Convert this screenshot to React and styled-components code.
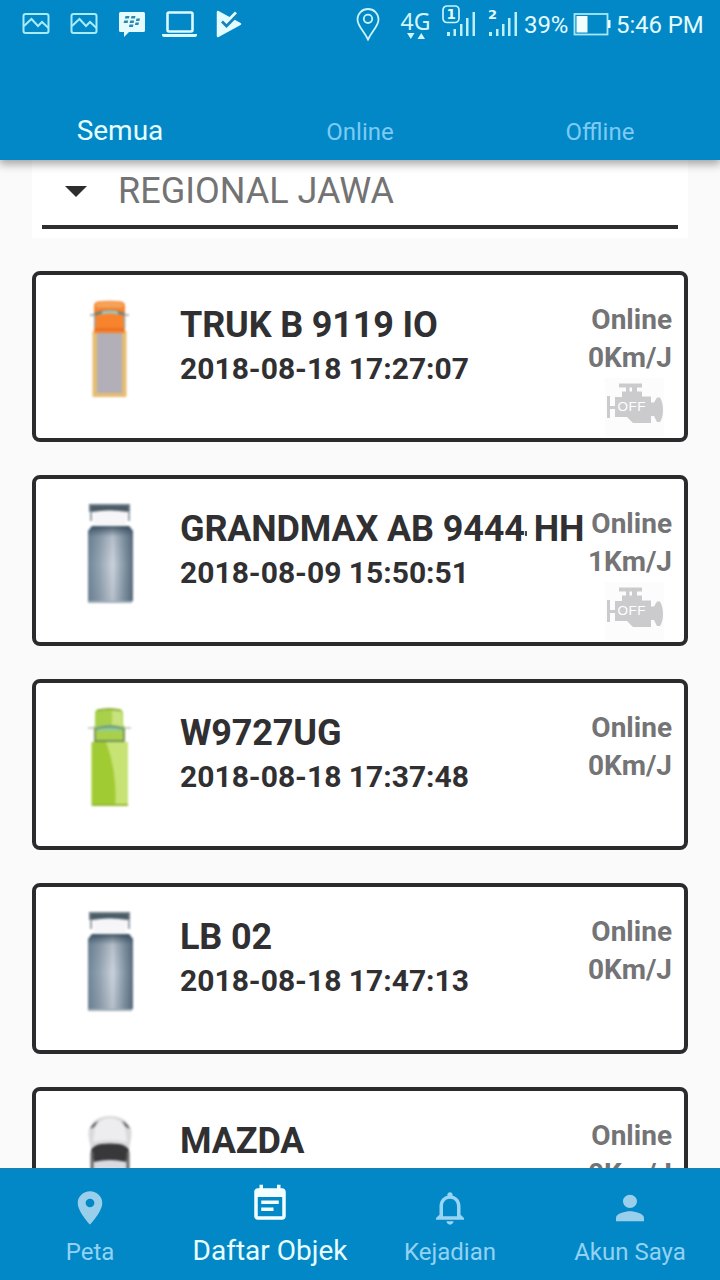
import React from "react";
import styled, { createGlobalStyle } from "styled-components";

const GlobalStyle = createGlobalStyle`
  * {
    box-sizing: border-box;
  }
  body {
    margin: 0;
    background: #fafafa;
    font-family: Roboto, "Liberation Sans", sans-serif;
  }
  svg {
    display: block;
    flex: none;
  }
`;

const Screen = styled.div`
  display: flex;
  flex-direction: column;
  width: 720px;
  height: 1280px;
  overflow: hidden;
  background: #fafafa;
`;

const Header = styled.header`
  position: relative;
  z-index: 1;
  display: flex;
  flex-direction: column;
  justify-content: space-between;
  flex: none;
  height: 160px;
  background: #0288c7;
  box-shadow: 0 3px 9px 1px rgba(0, 0, 0, 0.36);
`;

const StatusBar = styled.div`
  display: flex;
  justify-content: space-between;
  height: 50px;
  padding-left: 12px;
  color: #e4fbff;
`;

const StatusGroup = styled.div`
  display: flex;
  align-items: center;
`;

const StatusText = styled.span`
  width: ${(props) => props.$width}px;
  padding-top: 1px;
  font-size: 24px;
  line-height: 49px;
  letter-spacing: -0.1px;
  white-space: nowrap;
`;

const Tabs = styled.nav`
  display: grid;
  grid-template-columns: repeat(3, 1fr);
  height: 60px;
`;

const Tab = styled.span`
  text-align: center;
  font-size: ${(props) => (props.$active ? 28 : 24)}px;
  line-height: ${(props) => (props.$active ? 61 : 64)}px;
  color: ${(props) => (props.$active ? "#e6fdff" : "#7dcbf3")};
`;

const List = styled.main`
  display: flex;
  flex-direction: column;
  gap: 33px;
  flex: 1;
  min-height: 0;
  padding: 0 32px;
  overflow: hidden;
`;

const Region = styled.div`
  flex: none;
  height: 78px;
  padding: 0 10px 9px;
  background: #fff;
`;

const RegionSelect = styled.div`
  display: flex;
  align-items: center;
  height: 69px;
  padding: 0 0 3px 23px;
  border-bottom: 4px solid #2f2f31;
  color: #737373;
  font-size: 36px;
  svg {
    margin-right: 31px;
  }
`;

const Card = styled.article`
  display: flex;
  flex: none;
  height: 171px;
  padding: 25px 12px 0 28px;
  border: 4px solid #2b2b2d;
  border-radius: 8px;
  background: #fff;
`;

const Vehicle = styled.div`
  flex: none;
  width: 100px;
  height: 110px;
  filter: blur(0.8px);
`;

const Info = styled.div`
  flex: 1;
  min-width: 0;
  margin-left: 16px;
  padding-top: 3px;
  color: #303032;
  white-space: nowrap;
`;

const Title = styled.h2`
  display: flex;
  align-items: center;
  margin: 0;
  font-size: 36px;
  font-weight: 700;
  line-height: 44px;
  letter-spacing: -0.15px;
`;

const Stub = styled.i`
  width: 2px;
  height: 5px;
  margin: 9px 7px 0 0;
  background: #4a4a4c;
`;

const Time = styled.div`
  font-size: 30px;
  font-weight: 700;
  line-height: 44px;
`;

const State = styled.div`
  display: flex;
  flex-direction: column;
  align-items: flex-end;
  padding-top: 1px;
  color: #747476;
  font-size: 28px;
  font-weight: 700;
  line-height: 38px;
  white-space: nowrap;
  svg {
    margin: 1px 8px 0 0;
  }
`;

const BottomNav = styled.nav`
  display: grid;
  grid-template-columns: repeat(4, 1fr);
  flex: none;
  height: 112px;
  background: #0288c7;
  border-top: 1px solid #1a7fb0;
`;

const NavItem = styled.div`
  display: flex;
  flex-direction: column;
  align-items: center;
  padding-top: ${(props) => (props.$active ? 14 : 19)}px;
  color: ${(props) => (props.$active ? "#e9fdff" : "#93d2f2")};
  font-size: ${(props) => (props.$active ? 28 : 24)}px;
  line-height: 40px;
  white-space: nowrap;
  svg {
    margin-bottom: ${(props) => (props.$active ? 6 : 4)}px;
  }
`;

const PictureIcon = () => (
  <svg width="48" height="50" fill="none" stroke="#a8ecf8" strokeWidth="2">
    <rect x="11.500" y="14" width="25" height="19" rx="2" />
    <path d="M12 26l7.500-7 6.500 7 4-4 6.500 6" />
  </svg>
);

const MessengerIcon = () => (
  <svg width="48" height="50">
    <path d="M12.500 12h23a1.500 1.500 0 0 1 1.500 1.500v17a1.500 1.500 0 0 1-1.500 1.500H21l-5 5v-5h-3.500a1.500 1.500 0 0 1-1.500-1.500v-17A1.500 1.500 0 0 1 12.500 12z" fill="#e4fbff" />
    <g fill="#2b88ae">
      <path d="M17.500 16h4l-.6 2.600h-4zM23.500 16h4l-.6 2.600h-4zM16.200 20.500h4l-.6 2.600h-4zM22.200 20.500h4l-.6 2.600h-4zM28.500 18.500h3.500l-.6 2.600h-3.500zM27.500 22.500h3.500l-.6 2.600h-3.500zM21.500 24.500h4l-.6 2.600h-4z" />
    </g>
  </svg>
);

const LaptopIcon = () => (
  <svg width="48" height="50">
    <rect x="11.500" y="12.500" width="25" height="19" rx="1.500" fill="none" stroke="#dcf9ff" strokeWidth="2.600" />
    <path d="M6 34h35v1a2 2 0 0 1-2 2H8a2 2 0 0 1-2-2z" fill="#dcf9ff" />
  </svg>
);

const PlayCheckIcon = () => (
  <svg width="48" height="50">
    <path d="M14 12L36 24 14 36z" fill="#e4fbff" stroke="#e4fbff" strokeWidth="2.500" strokeLinejoin="round" />
    <path d="M24 20.500L32 12.500" fill="none" stroke="#e4fbff" strokeWidth="2.800" />
    <path d="M18 21.500l4.500 4.500L34 14.500" fill="none" stroke="#1683b8" strokeWidth="2.800" />
  </svg>
);

const LocationIcon = () => (
  <svg width="48" height="50" fill="none" stroke="#c9f4fb" strokeWidth="1.800">
    <path d="M20 9c6 0 10.500 4.600 10.500 10.400C30.500 26 24 31 20 39.500 16 31 9.500 26 9.500 19.400 9.500 13.600 14 9 20 9z" />
    <circle cx="20" cy="18.800" r="4.200" />
  </svg>
);

const NetworkIcon = () => (
  <svg width="40" height="50" fill="#d3f6fc">
    <text x="4.500" y="29.500" fontSize="23" fontFamily="Noto Sans" textLength="30">4G</text>
    <path d="M11 33h7.500l-3.700 6zM21.500 39h7.500l-3.700-6z" />
  </svg>
);

const SignalOneIcon = () => (
  <svg width="46" height="50">
    <rect x="7" y="6" width="16" height="16.500" rx="4" fill="none" stroke="#c9f4fb" strokeWidth="1.700" />
    <text x="10.500" y="19" fontSize="13.500" fontWeight="700" fill="#e4fbff" fontFamily="DejaVu Sans">1</text>
    <path d="M11 32h3v4h-3zM17.500 29H20v7h-2.500zM24 24h2.500v12H24zM30 18h2.500v18H30zM36.500 12H39v24h-2.500z" fill="#bcf0fa" />
  </svg>
);

const SignalTwoIcon = () => (
  <svg width="42" height="50">
    <text x="6" y="18.500" fontSize="13" fontWeight="700" fill="#e4fbff" fontFamily="DejaVu Sans">2</text>
    <path d="M7 32h3v4H7zM14 29h2.500v7H14zM20 24h2.500v12H20zM26 18h2.500v18H26zM32.500 12H35v24h-2.500z" fill="#bcf0fa" />
  </svg>
);

const BatteryIcon = () => (
  <svg width="44" height="50">
    <rect x="2.500" y="14" width="33" height="20.500" fill="none" stroke="#a6e8f6" strokeWidth="1.800" />
    <path d="M4.500 16h11v16.500h-11zM36 20h2.500v8H36z" fill="#f2ffff" />
  </svg>
);

const EngineIcon = () => (
  <svg width="59" height="58">
    <path d="M0 0h59v58H0z" fill="#fcfcfc" />
    <path d="M14 5.500h23v4h-5v4h5v5h9v6h3l3-5h3q3 5 3 12.500T55 44h-3l-3-6h-3v7H28l-6-6H10v-8H5v9H2V18h3v10h5v-9h7v-5.500h4v-4h-7z" fill="#cbcbcd" />
    <path d="M24.500 9.500h2.500v4h-2.500z" fill="#fcfcfc" />
    <text x="12.500" y="32.500" fontSize="13.500" fontWeight="400" fill="#fff" fontFamily="Liberation Sans" textLength="28">OFF</text>
  </svg>
);

const OrangeTruck = () => (
  <svg width="100" height="110">
    <rect x="28.500" y="31" width="34" height="66" rx="1" fill="#e5bc72" />
    <path d="M33 32h25v61H33z" fill="#b2afb9" />
    <path d="M30 6q0-4 4-4.500 11.500-1.500 23 0 4 .5 4 4.500v27H30z" fill="#f7842c" />
    <path d="M32 3.500q13.500-4 27 0v4H32z" fill="#f5a35a" />
    <path d="M30 16q15.500-7 31 0v-3q-15.500-6-31 0z" fill="#6c8187" />
    <path d="M38 11.500q8-2 16 0v3q-8-2-16 0z" fill="#a3c7c5" />
    <path d="M26 15h5M60 15h5M31 16v12M60.500 16v12" stroke="#9a9fa0" strokeWidth="1.500" />
    <path d="M31 28h29v3H31z" fill="#ee6f22" />
  </svg>
);

const GreenTruck = () => (
  <svg width="100" height="110">
    <path d="M31 5q0-3.500 4-3.500h20q4 0 4 3.500v12l2 2v13H30V19l1-2z" fill="#a8d04a" />
    <path d="M48 3h7q3 0 3 3v12H48z" fill="#c8e27c" />
    <path d="M33 2.500q12.500-3 24 0" stroke="#8db23a" strokeWidth="2" fill="none" />
    <path d="M31 19q14-5 29 0v4H31z" fill="#8fcba0" />
    <path d="M31 21q14-5 29 0v12H31z" fill="none" stroke="#76915a" strokeWidth="1.800" />
    <path d="M24 20h6M61 20h6" stroke="#b9c3b0" strokeWidth="1.500" />
    <path d="M27.500 34H64v64H27.500z" fill="#a1cb32" />
    <path d="M42 34h22v64H51q1-9 0-22-1-20-9-42z" fill="#c6e374" />
    <path d="M28 97h36" stroke="#94ba33" strokeWidth="2" />
  </svg>
);

const GreyTruck = () => (
  <svg width="100" height="110">
    <defs>
      <linearGradient id="body" x1="0" x2="1">
        <stop offset="0" stopColor="#70869a" />
        <stop offset=".25" stopColor="#93a2b0" />
        <stop offset=".55" stopColor="#cbd2dc" />
        <stop offset=".78" stopColor="#8b9cab" />
        <stop offset="1" stopColor="#586c7e" />
      </linearGradient>
      <linearGradient id="shade" x1="0" x2="0" y1="0" y2="1">
        <stop offset="0" stopColor="#2b4052" stopOpacity=".85" />
        <stop offset=".14" stopColor="#3b5062" stopOpacity=".15" />
        <stop offset=".5" stopColor="#3b5062" stopOpacity="0" />
        <stop offset="1" stopColor="#3b5062" stopOpacity=".15" />
      </linearGradient>
    </defs>
    <path d="M25 1q0-2 2-2h37q2 0 2 2v7H25z" fill="#6b7983" />
    <path d="M27 2h37v5q-18-2-37 0z" fill="#495b65" />
    <path d="M29 8q16-3 34 0l-1 13H30z" fill="#f6f6f9" />
    <path d="M27 7v10M65 7v10" stroke="#8b949c" strokeWidth="1.800" />
    <path d="M24 27l4-5h37l4 5v70q-22 3-45 0z" fill="url(#body)" />
    <path d="M24 27l4-5h37l4 5v70q-22 3-45 0z" fill="url(#shade)" />
    <path d="M24 98h44" stroke="#a2aeb8" strokeWidth="2" />
  </svg>
);

const WhiteCar = () => (
  <svg width="100" height="110">
    <path d="M25 23q-2-10 3-15Q33 0 46 0t18 8q5 5 3 15l-2 11v74H27V34z" fill="#dadadc" />
    <path d="M31 12q5-10 15-10t15 10l2 14q-17-4-34 0z" fill="#ededef" />
    <path d="M26 13q3-6 8-8l-4 6zM66 13q-3-6-8-8l4 6z" fill="#55585b" />
    <path d="M27 34q3-5 10-6 9-1 18 0 7 1 10 6l-3 12q-16-4-32 0z" fill="#38383a" />
    <path d="M28 36v70M64 36v70" stroke="#646466" strokeWidth="3" />
    <path d="M31 46q15-3 30 0v60H31z" fill="#d9dae2" />
  </svg>
);

const vehicles = [
  { name: "TRUK B 9119 IO", time: "2018-08-18 17:27:07", speed: 0, engine: true, Picture: OrangeTruck },
  { name: "GRANDMAX AB 9444", suffix: "HH", time: "2018-08-09 15:50:51", speed: 1, engine: true, Picture: GreyTruck },
  { name: "W9727UG", time: "2018-08-18 17:37:48", speed: 0, Picture: GreenTruck },
  { name: "LB 02", time: "2018-08-18 17:47:13", speed: 0, Picture: GreyTruck },
  { name: "MAZDA", speed: 0, Picture: WhiteCar },
];

const VehicleCard = ({ name, suffix, time, speed, engine, Picture }) => (
  <Card>
    <Vehicle>
      <Picture />
    </Vehicle>
    <Info>
      <Title>
        {name}
        {suffix && <Stub />}
        {suffix}
      </Title>
      {time && <Time>{time}</Time>}
    </Info>
    <State>
      <span>Online</span>
      <span>{speed}Km/J</span>
      {engine && <EngineIcon />}
    </State>
  </Card>
);

const App = () => (
  <Screen>
    <GlobalStyle />
    <Header>
      <StatusBar>
        <StatusGroup>
          <PictureIcon />
          <PictureIcon />
          <MessengerIcon />
          <LaptopIcon />
          <PlayCheckIcon />
        </StatusGroup>
        <StatusGroup>
          <LocationIcon />
          <NetworkIcon />
          <SignalOneIcon />
          <SignalTwoIcon />
          <StatusText $width={48}>39%</StatusText>
          <BatteryIcon />
          <StatusText $width={104}>5:46 PM</StatusText>
        </StatusGroup>
      </StatusBar>
      <Tabs>
        <Tab $active>Semua</Tab>
        <Tab>Online</Tab>
        <Tab>Offline</Tab>
      </Tabs>
    </Header>
    <List>
      <Region>
        <RegionSelect>
          <svg width="22" height="11">
            <path d="M0 0h22L11 11z" fill="#2d2d2f" />
          </svg>
          REGIONAL JAWA
        </RegionSelect>
      </Region>
      {vehicles.map((vehicle) => (
        <VehicleCard key={vehicle.name} {...vehicle} />
      ))}
    </List>
    <BottomNav>
      <NavItem>
        <svg width="42" height="40" viewBox="0 0 24 24" preserveAspectRatio="none" fill="#99cfea">
          <path d="M12 2C8.130 2 5 5.130 5 9c0 5.250 7 13 7 13s7-7.750 7-13c0-3.870-3.130-7-7-7zm0 9.500a2.500 2.500 0 0 1 0-5 2.500 2.500 0 0 1 0 5z" />
        </svg>
        Peta
      </NavItem>
      <NavItem $active>
        <svg width="42" height="42" viewBox="0 0 24 24" fill="#f4ffff">
          <path d="M17 10H7v2h10v-2zm2-7h-1V1h-2v2H8V1H6v2H5c-1.110 0-1.990.9-1.990 2L3 19c0 1.100.89 2 2 2h14c1.100 0 2-.9 2-2V5c0-1.100-.9-2-2-2zm0 16H5V8h14v11zm-5-5H7v2h7v-2z" />
        </svg>
        Daftar Objek
      </NavItem>
      <NavItem>
        <svg width="42" height="40" viewBox="0 0 24 24" preserveAspectRatio="none" fill="#99d5f2">
          <path d="M12 22c1.100 0 2-.9 2-2h-4c0 1.100.89 2 2 2zm6-6v-5c0-3.070-1.640-5.640-4.500-6.320V4c0-.83-.67-1.500-1.500-1.500s-1.500.67-1.500 1.500v.68C7.630 5.360 6 7.920 6 11v5l-2 2v1h16v-1l-2-2zm-2 1H8v-6c0-2.480 1.510-4.500 4-4.500s4 2.020 4 4.500v6z" />
        </svg>
        Kejadian
      </NavItem>
      <NavItem>
        <svg width="42" height="40" viewBox="0 0 24 24" preserveAspectRatio="none" fill="#99cfea">
          <path d="M12 12c2.210 0 4-1.790 4-4s-1.790-4-4-4-4 1.790-4 4 1.790 4 4 4zm0 2c-2.670 0-8 1.340-8 4v2h16v-2c0-2.660-5.330-4-8-4z" />
        </svg>
        Akun Saya
      </NavItem>
    </BottomNav>
  </Screen>
);

export default App;
